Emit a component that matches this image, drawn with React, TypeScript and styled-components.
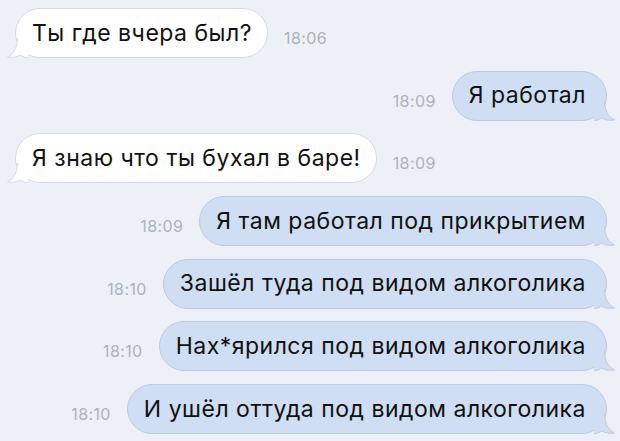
import React from 'react';
import styled, { createGlobalStyle } from 'styled-components';

const Global = createGlobalStyle`
  html, body { margin: 0; padding: 0; background: #edf1f7; }
  body { font-family: Inter, "Noto Sans", sans-serif; }
`;

const Chat = styled.div`
  display: flex;
  flex-direction: column;
  gap: 12.7px;
  padding: 8px 13px 0 15px;
  width: 620px;
  height: 441px;
  box-sizing: border-box;
  overflow: hidden;
  background: #edf1f7;
`;

const Row = styled.div<{ $out: boolean }>`
  display: flex;
  align-items: center;
  justify-content: ${(p) => (p.$out ? 'flex-end' : 'flex-start')};
  gap: 16px;
`;

const Bubble = styled.div<{ $out: boolean }>`
  position: relative;
  height: 50px;
  box-sizing: border-box;
  display: flex;
  align-items: center;
  padding: ${(p) => (p.$out ? '0 20px 1px 16px' : '0 15px 1px 16px')};
  border-radius: 25px;
  background: ${(p) => (p.$out ? '#cfdef2' : '#ffffff')};
  border: 1px solid ${(p) => (p.$out ? '#bccbe0' : '#d5dbe4')};
  color: #111111;
  font-size: 23px;
  letter-spacing: 0.5px;
  white-space: nowrap;
`;

const Tail = styled.svg<{ $out: boolean }>`
  position: absolute;
  bottom: -1px;
  width: 22px;
  height: 20px;
  ${(p) => (p.$out ? 'right: -10px;' : 'left: -10px; transform: scaleX(-1);')}
  overflow: visible;
`;

const Time = styled.span`
  font-size: 16px;
  letter-spacing: 0.4px;
  color: #abb2bc;
  margin-top: 10px;
`;

type Msg = { out: boolean; text: string; time: string };

const messages: Msg[] = [
  { out: false, text: 'Ты где вчера был?', time: '18:06' },
  { out: true, text: 'Я работал', time: '18:09' },
  { out: false, text: 'Я знаю что ты бухал в баре!', time: '18:09' },
  { out: true, text: 'Я там работал под прикрытием', time: '18:09' },
  { out: true, text: 'Зашёл туда под видом алкоголика', time: '18:10' },
  { out: true, text: 'Нах*ярился под видом алкоголика', time: '18:10' },
  { out: true, text: 'И ушёл оттуда под видом алкоголика', time: '18:10' },
];

function BubbleTail({ out }: { out: boolean }) {
  const fill = out ? '#cfdef2' : '#ffffff';
  const stroke = out ? '#bccbe0' : '#d5dbe4';
  return (
    <Tail $out={out} viewBox="0 0 22 20">
      <path d="M0 19.5 L0 0 L11 0 C11 9 13 15 20.5 19 C15 19.8 11 19 7.5 17 C5 19 2.5 19.5 0 19.5 Z" fill={fill} />
      <path d="M10.5 0 C11 9 13 15 20.5 19 C15 19.8 11 19 7.5 17 C5 19 2.5 19.5 0 19.5" fill="none" stroke={stroke} strokeWidth="1" />
    </Tail>
  );
}

export default function App() {
  return (
    <>
      <Global />
      <Chat>
        {messages.map((m, i) => (
          <Row key={i} $out={m.out}>
            {m.out && <Time>{m.time}</Time>}
            <Bubble $out={m.out}>
              {m.text}
              <BubbleTail out={m.out} />
            </Bubble>
            {!m.out && <Time>{m.time}</Time>}
          </Row>
        ))}
      </Chat>
    </>
  );
}
